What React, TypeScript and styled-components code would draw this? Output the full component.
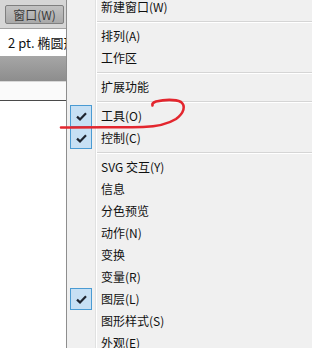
import styled, { createGlobalStyle } from 'styled-components';

const GlobalStyle = createGlobalStyle`
  html, body {
    margin: 0;
    padding: 0;
    background: #ffffff;
  }
  body {
    font-family: 'Noto Sans CJK SC', 'Noto Sans', sans-serif;
  }
`;

type Entry =
  | { kind: 'item'; label: string; checked?: boolean }
  | { kind: 'sep' };

const entries: Entry[] = [
  { kind: 'item', label: '新建窗口(W)' },
  { kind: 'sep' },
  { kind: 'item', label: '排列(A)' },
  { kind: 'item', label: '工作区' },
  { kind: 'sep' },
  { kind: 'item', label: '扩展功能' },
  { kind: 'sep' },
  { kind: 'item', label: '工具(O)', checked: true },
  { kind: 'item', label: '控制(C)', checked: true },
  { kind: 'sep' },
  { kind: 'item', label: 'SVG 交互(Y)' },
  { kind: 'item', label: '信息' },
  { kind: 'item', label: '分色预览' },
  { kind: 'item', label: '动作(N)' },
  { kind: 'item', label: '变换' },
  { kind: 'item', label: '变量(R)' },
  { kind: 'item', label: '图层(L)', checked: true },
  { kind: 'item', label: '图形样式(S)' },
  { kind: 'item', label: '外观(E)' }
];

export default function App() {
  return (
    <Screen>
      <GlobalStyle />
      <LeftPane>
        <Toolbar>
          <ToolButton>窗口(W)</ToolButton>
        </Toolbar>
        <FieldRow>2 pt. 椭圆形</FieldRow>
        <DarkBar />
        <Gap />
        <Canvas />
      </LeftPane>

      <Menu>
        <MenuList>
          {entries.map((e, i) =>
            e.kind === 'sep' ? (
              <Separator key={i} />
            ) : (
              <Item key={i}>
                <Gutter>
                  {e.checked ? (
                    <CheckBox>
                      <svg width='11' height='9' viewBox='0 0 11 9'>
                        <path
                          d='M1 4.6 L4 7.4 L10 1.2'
                          fill='none'
                          stroke='#1f2530'
                          strokeWidth='2.2'
                        />
                      </svg>
                    </CheckBox>
                  ) : null}
                </Gutter>
                <Label>{e.label}</Label>
              </Item>
            )
          )}
        </MenuList>
      </Menu>

      {/* red hand-drawn annotation */}
      <Scribble width='312' height='348' viewBox='0 0 312 348'>
        <path
          d='M61 127.5 C 90 127, 120 127.5, 143 127 C 158 126.5, 168 124, 176 119 C 184 113, 186 106, 181 102 C 175 99, 164 99.5, 156 101.5 C 153 102.5, 152 104, 152.5 105.5'
          fill='none'
          stroke='#e3262e'
          strokeWidth='2.6'
          strokeLinecap='round'
        />
      </Scribble>
    </Screen>
  );
}

const Screen = styled.div`
  position: relative;
  display: flex;
  width: 312px;
  height: 348px;
  overflow: hidden;
`;

const LeftPane = styled.div`
  display: flex;
  flex-direction: column;
  width: 66px;
  flex-shrink: 0;
  border-right: 1px solid #8e8e8e;
  background: #ffffff;
  overflow: hidden;
`;

const Toolbar = styled.div`
  height: 29px;
  padding: 5px 0 0 5px;
  box-sizing: border-box;
  background: #d6d6d6;
  border-bottom: 1px solid #a2a2a2;
`;

const ToolButton = styled.div`
  width: 59px;
  height: 19px;
  box-sizing: border-box;
  border: 1px solid #7f7f7f;
  border-radius: 2px;
  background: linear-gradient(#c2c2c2, #a9a9a9);
  color: #3a3a3a;
  font-size: 12px;
  line-height: 17px;
  text-align: center;
`;

const FieldRow = styled.div`
  height: 27px;
  padding-left: 8px;
  background: #ffffff;
  color: #111111;
  font-size: 13px;
  line-height: 27px;
  white-space: nowrap;
`;

const DarkBar = styled.div`
  height: 25px;
  background: linear-gradient(#a6a6a6, #8d8d8d);
  border-bottom: 1px solid #d8d8d8;
`;

const Gap = styled.div`
  height: 18px;
  background: #fafafa;
  border-bottom: 1px solid #4a4a4a;
`;

const Canvas = styled.div`
  flex: 1;
  background: #ffffff;
`;

const Menu = styled.div`
  flex: 1;
  background: linear-gradient(
    to right,
    #f0f0f0 28px,
    #e0e1e1 28px 29px,
    #ffffff 29px 30px,
    #f0f0f0 30px
  );
  overflow: hidden;
`;

const MenuList = styled.div`
  display: flex;
  flex-direction: column;
  margin-top: -4px;
`;

const Item = styled.div`
  display: grid;
  grid-template-columns: 34px 1fr;
  align-items: center;
  height: 22px;
`;

const Gutter = styled.div`
  display: flex;
  align-items: center;
  padding-left: 3px;
  height: 22px;
`;

const CheckBox = styled.div`
  display: grid;
  place-items: center;
  width: 22px;
  height: 22px;
  box-sizing: border-box;
  border: 1px solid #4a9bd3;
  background: #c7e0f4;
`;

const Label = styled.span`
  font-size: 12px;
  color: #101010;
  line-height: 22px;
  white-space: nowrap;
`;

const Separator = styled.div`
  height: 7px;
  margin-left: 30px;
  box-sizing: border-box;
  padding-top: 3px;

  &::before {
    content: '';
    display: block;
    height: 1px;
    background: #d5d5d5;
    border-bottom: 1px solid #ffffff;
  }
`;

const Scribble = styled.svg`
  position: absolute;
  top: 0;
  left: 0;
  pointer-events: none;
`;
